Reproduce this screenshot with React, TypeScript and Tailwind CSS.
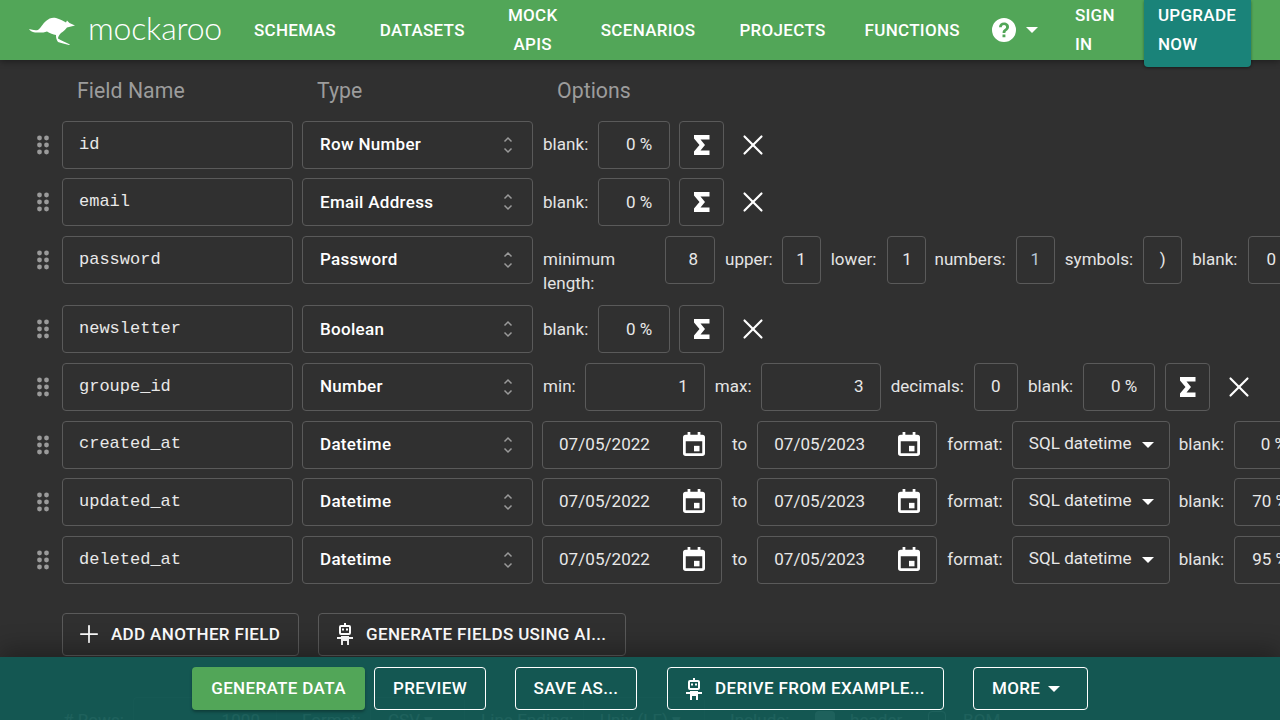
import { Plus, X } from 'lucide-react';
import type { ReactNode } from 'react';

const box = 'h-12 shrink-0 rounded border border-[#5a5a5a] flex items-center';

function Kangaroo() {
  return (
    <svg width="48" height="30" viewBox="0 0 48 30" className="shrink-0 mt-1">
      <path
        fill="#fff"
        d="M0 12C3 13 6 13.500 9 13C12 11 14 6 17 4C20 1 24 0 27 1C31 2 34 4 37 5.500L38 3.500L40.500 6L46 8.500L42 9.500L38 10.500C36 13 34 15 32 16C30 18 29 20 29 21.500C32 23.500 37 25.500 41 27.500L40 28C36 27 32 26 29 25C27 22 27 20 27 18C24 17.500 21 16.500 18 14.500C14 16 10 15.500 6 15.500C3 15 1 14 0 12Z"
      />
    </svg>
  );
}

function HelpIcon() {
  return (
    <svg width="24" height="24" viewBox="0 0 24 24" className="shrink-0">
      <path
        fill="#fff"
        d="M12 0a12 12 0 1 0 0 24 12 12 0 0 0 0-24zm1.400 19.200h-2.900v-2.800h2.900v2.800zm2.800-8c-.5.700-1.100 1.200-1.800 1.700-.8.600-1 1-1 2.100h-2.800c0-1.900.5-2.800 1.800-3.700.9-.6 1.700-1.200 1.700-2.300 0-1.100-.9-1.900-2.100-1.900-1.300 0-2.100.9-2.200 2.200H7c.1-2.900 2.100-4.700 5-4.700 2.800 0 5 1.700 5 4.300 0 .9-.3 1.700-.8 2.300z"
      />
    </svg>
  );
}

function Caret({ className = '' }: { className?: string }) {
  return <span className={`w-0 h-0 border-x-[6px] border-x-transparent border-t-[6px] border-t-white ${className}`} />;
}

function Robot() {
  return (
    <svg width="18" height="22" viewBox="0 0 18 22" className="shrink-0" fill="#fff">
      <path fillRule="evenodd" d="M8 0h2v2h3a2 2 0 0 1 2 2v6a2 2 0 0 1-2 2H5a2 2 0 0 1-2-2V4a2 2 0 0 1 2-2h3V0zM5 4v6h8V4H5z" />
      <rect x="6" y="5.500" width="2" height="2" />
      <rect x="10" y="5.500" width="2" height="2" />
      <path d="M5 13h8v1h4v2h-4v6h-2v-4H7v4H5v-6H1v-2h4v-1z" />
    </svg>
  );
}

function Grip() {
  return (
    <svg width="14" height="20" viewBox="0 0 14 20" className="shrink-0" fill="#9a9a9a">
      {[3, 10, 17].map((y) => (
        <g key={y}>
          <circle cx="3.500" cy={y} r="2.400" />
          <circle cx="10.500" cy={y} r="2.400" />
        </g>
      ))}
    </svg>
  );
}

function Sigma() {
  return (
    <svg width="16" height="20" viewBox="0 0 16 20" fill="#fff">
      <path d="M0 0h15.500v4.500H6.500l4.500 5.500-4.500 5.500h9V20H0v-3.500L5.500 10 0 3.500V0z" />
    </svg>
  );
}

function CalendarIcon() {
  return (
    <svg width="22" height="24" viewBox="0 0 24 26" className="shrink-0 -mt-[2px]" fill="#fff">
      <path
        fillRule="evenodd"
        d="M5 0h3v3h8V0h3v3h2a3 3 0 0 1 3 3v17a3 3 0 0 1-3 3H3a3 3 0 0 1-3-3V6a3 3 0 0 1 3-3h2V0zM3 10v13h18V10H3z"
      />
      <rect x="12" y="15" width="6" height="6" />
    </svg>
  );
}

function UpDown() {
  return (
    <svg width="10" height="18" viewBox="0 0 10 18" fill="none" stroke="#9a9a9a" strokeWidth="1.500" className="shrink-0">
      <path d="M1.500 5.500L5 2l3.500 3.500M1.500 12.500L5 16l3.500-3.500" />
    </svg>
  );
}

function Label({ children, className = '' }: { children: ReactNode; className?: string }) {
  return <span className={`shrink-0 h-12 flex items-center text-[#e4e4e4] ${className}`}>{children}</span>;
}

function NumInput({ value, className = '' }: { value: string; className?: string }) {
  return <div className={`${box} justify-end pr-4 text-[#e8e8e8] ${className}`}>{value}</div>;
}

function Actions({ ml = 'ml-[9px]' }: { ml?: string }) {
  return (
    <>
      <button className={`${box} w-[45px] justify-center ${ml}`}>
        <Sigma />
      </button>
      <X className="ml-[12px] mt-[7px] shrink-0 text-white" size={34} strokeWidth={1.500} />
    </>
  );
}

function Blank({ value = '0 %', w = 'w-[72px]' }: { value?: string; w?: string }) {
  return (
    <>
      <Label className="ml-[10px]">blank:</Label>
      <div className={`${box} ${w} ml-[10px] justify-end pr-[17px] text-[#e8e8e8] whitespace-pre`}>{value}</div>
    </>
  );
}

function DateInput({ value, className = '' }: { value: string; className?: string }) {
  return (
    <div className={`${box} w-[180px] pl-4 pr-4 justify-between text-[#e8e8e8] ${className}`}>
      {value}
      <CalendarIcon />
    </div>
  );
}

function DatetimeOptions({ blank }: { blank: string }) {
  return (
    <>
      <DateInput value="07/05/2022" className="-ml-[1px]" />
      <Label className="ml-[10px]">to</Label>
      <DateInput value="07/05/2023" className="ml-[10px]" />
      <Label className="ml-[10px]">format:</Label>
      <div className={`${box} w-[158px] ml-[9px] pl-4 text-[#e8e8e8]`}>
        <span className="-mt-0.5">SQL datetime</span>
        <Caret className="ml-[10px]" />
      </div>
      <Label className="ml-[9px]">blank:</Label>
      <div className={`${box} w-[72px] ml-[10px] pl-[17px] text-[#e8e8e8] whitespace-pre`}>{blank} %</div>
    </>
  );
}

function Row({ name, type, gap = 'mb-[9.600px]', children }: { name: string; type: string; gap?: string; children: ReactNode }) {
  return (
    <div className={`flex items-start pl-[37px] whitespace-nowrap ${gap}`}>
      <div className="h-12 flex items-center w-[25px] shrink-0 -ml-[1px] pr-[1px]">
        <Grip />
      </div>
      <div className={`${box} w-[231px] ml-[1px] pl-[16px] pb-[1px] font-['Liberation_Mono',monospace] tracking-normal text-[#e8e8e8]`}>
        {name}
      </div>
      <div className={`${box} w-[231px] ml-[9px] pl-[17px] pr-[19px] justify-between font-medium tracking-[0.3px] text-white`}>
        {type}
        <UpDown />
      </div>
      <div className="ml-[10px] flex items-start">{children}</div>
    </div>
  );
}

function OutlineButton({ children, className = '' }: { children: ReactNode; className?: string }) {
  return (
    <button className={`h-[43px] shrink-0 rounded border border-white flex items-center tracking-[0.35px] font-medium text-white ${className}`}>
      {children}
    </button>
  );
}

export default function App() {
  return (
    <div className="h-screen overflow-hidden relative bg-[#303030] font-['Roboto',sans-serif] text-[17px] tracking-[0.05px] text-white">
      <header className="h-[60px] relative z-20 bg-[#52a658] shadow-[0_2px_6px_rgba(0,0,0,0.35)] flex items-center pl-[29px] font-medium tracking-[0.3px] leading-[29px] whitespace-nowrap">
        <div className="flex items-center w-[225px] shrink-0">
          <Kangaroo />
          <span className="ml-[11px] text-[32px] font-['Lato',sans-serif] font-light tracking-[-0.2px] leading-none -mt-1">mockaroo</span>
        </div>
        <a>SCHEMAS</a>
        <a className="ml-[44px]">DATASETS</a>
        <a className="ml-[43px] w-[50px] text-center whitespace-normal">MOCK APIS</a>
        <a className="ml-[43px]">SCENARIOS</a>
        <a className="ml-[44px]">PROJECTS</a>
        <a className="ml-[39px]">FUNCTIONS</a>
        <span className="ml-[32px]">
          <HelpIcon />
        </span>
        <Caret className="ml-[10px]" />
        <a className="ml-[37px] w-[42px] whitespace-normal">SIGN IN</a>
        <a className="ml-[27px] w-[107px] h-[67px] self-start rounded-b bg-[#1a8379] px-[14px] pt-[1px] whitespace-normal shadow-[0_1px_3px_rgba(0,0,0,0.4)]">UPGRADE NOW</a>
      </header>

      <main>
        <div className="flex h-[60.800px] items-center pt-[1px] text-[21.250px] text-[#9c9c9c]">
          <span className="ml-[77px] w-[240px]">Field Name</span>
          <span className="w-[240px]">Type</span>
          <span>Options</span>
        </div>

        <Row name="id" type="Row Number">
          <Label>blank:</Label>
          <div className={`${box} w-[72px] ml-[10px] justify-end pr-[17px] text-[#e8e8e8]`}>0 %</div>
          <Actions />
        </Row>
        <Row name="email" type="Email Address">
          <Label>blank:</Label>
          <div className={`${box} w-[72px] ml-[10px] justify-end pr-[17px] text-[#e8e8e8]`}>0 %</div>
          <Actions />
        </Row>
        <Row name="password" type="Password" gap="mb-[9.400px]">
          <span className="w-[112px] pt-[11px] pb-px leading-6 whitespace-normal shrink-0 text-[#e4e4e4]">minimum length:</span>
          <NumInput value="8" className="w-[50px] ml-[10px]" />
          <Label className="ml-[10px]">upper:</Label>
          <div className={`${box} w-[39px] ml-[9px] justify-center text-[#e8e8e8]`}>1</div>
          <Label className="ml-[10px]">lower:</Label>
          <div className={`${box} w-[39px] ml-[11px] justify-center text-[#e8e8e8]`}>1</div>
          <Label className="ml-[8px]">numbers:</Label>
          <div className={`${box} w-[39px] ml-[10px] justify-center text-[#b9c8d8]`}>1</div>
          <Label className="ml-[10px]">symbols:</Label>
          <div className={`${box} w-[39px] ml-[10px] justify-center text-[#e8e8e8]`}>)</div>
          <Label className="ml-[10px]">blank:</Label>
          <div className={`${box} w-[72px] ml-[10px] pl-[18px] text-[#e8e8e8]`}>0 %</div>
        </Row>
        <Row name="newsletter" type="Boolean">
          <Label>blank:</Label>
          <div className={`${box} w-[72px] ml-[10px] justify-end pr-[17px] text-[#e8e8e8]`}>0 %</div>
          <Actions />
        </Row>
        <Row name="groupe_id" type="Number">
          <Label>min:</Label>
          <NumInput value="1" className="w-[120px] ml-[9px]" />
          <Label className="ml-[10px]">max:</Label>
          <NumInput value="3" className="w-[120px] ml-[9px]" />
          <Label className="ml-[10px]">decimals:</Label>
          <div className={`${box} w-[44px] ml-[10px] justify-center text-[#e8e8e8]`}>0</div>
          <Blank />
          <Actions ml="ml-[10px]" />
        </Row>
        <Row name="created_at" type="Datetime">
          <DatetimeOptions blank="  0" />
        </Row>
        <Row name="updated_at" type="Datetime">
          <DatetimeOptions blank="70" />
        </Row>
        <Row name="deleted_at" type="Datetime" gap="mb-[29.200px]">
          <DatetimeOptions blank="95" />
        </Row>

        <div className="flex pl-[62px] gap-[19px] tracking-[0.35px]">
          <button className="h-[43px] w-[237px] rounded border border-[#5a5a5a] flex items-center pl-[12px] gap-[8px] font-medium">
            <Plus size={28} strokeWidth={1.500} />
            ADD ANOTHER FIELD
          </button>
          <button className="h-[43px] w-[308px] rounded border border-[#5a5a5a] flex items-center pl-[17px] gap-[12px] font-medium">
            <Robot />
            GENERATE FIELDS USING AI...
          </button>
        </div>

        {/* sits under the translucent footer */}
        <div className="flex items-center h-12 mt-[41px] whitespace-nowrap text-[#e8e8e8]">
          <span className="ml-[63px] w-[70px]"># Rows:</span>
          <div className={`${box} w-[144px] justify-end pr-4`}>1000</div>
          <span className="ml-[25px] w-[68px]">Format:</span>
          <div className={`${box} w-[95px] pl-[17px]`}>CSV ▾</div>
          <span className="ml-[16px] w-[102px]">Line Ending:</span>
          <div className={`${box} w-[122px] pl-[16px]`}>Unix (LF) ▾</div>
          <span className="ml-[25px] w-[85px]">Include:</span>
          <span className="w-5 h-5 rounded-sm bg-[#e8e8e8]" />
          <span className="ml-[15px] w-[78px]">header</span>
          <span className="w-[18px] h-5 rounded-sm border border-[#e8e8e8]" />
          <span className="ml-[17px]">BOM</span>
        </div>
      </main>

      <footer className="absolute z-10 left-0 right-0 bottom-0 h-[63px] bg-[#135a54]/95 shadow-[0_-8px_24px_rgba(0,0,0,0.3)] flex items-start pt-[10px] whitespace-nowrap">
        <button className="ml-[192px] h-[43px] w-[173px] rounded bg-[#52a658] font-medium tracking-[0.35px] text-white shadow-[0_2px_3px_rgba(0,0,0,0.3)]">
          GENERATE DATA
        </button>
        <OutlineButton className="ml-[9px] w-[112px] justify-center">PREVIEW</OutlineButton>
        <OutlineButton className="ml-[29px] w-[122px] justify-center">SAVE AS...</OutlineButton>
        <OutlineButton className="ml-[30px] w-[277px] pl-[17px] gap-[12px]">
          <Robot />
          DERIVE FROM EXAMPLE...
        </OutlineButton>
        <OutlineButton className="ml-[29px] w-[115px] pl-[18px] gap-[8px]">
          MORE
          <Caret />
        </OutlineButton>
      </footer>
    </div>
  );
}
